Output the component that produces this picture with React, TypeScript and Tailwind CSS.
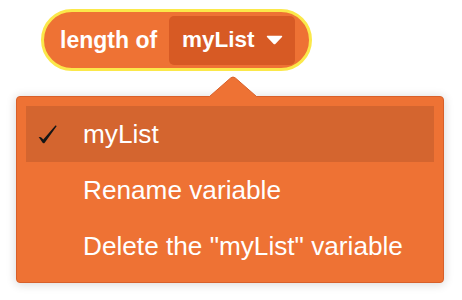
import React from 'react';

const font = { fontFamily: '"Liberation Sans", Arial, Helvetica, sans-serif' };

function CheckIcon() {
  return (
    <svg width="24" height="22" viewBox="0 0 24 22" className="shrink-0">
      <path
        d="M2.6 14.6 Q4.6 13.2 6.6 15.8 L7.3 16.6 L19.4 2.6 Q20.3 2.2 20.6 3.2 L8.9 19.4 Q7.6 21 6.4 19.6 L4.4 16.4 Q3.6 15.3 2.6 14.6 Z"
        fill="#161616"
      />
    </svg>
  );
}

function DropdownCaret() {
  return (
    <svg width="17" height="10" viewBox="0 0 17 10" className="shrink-0">
      <path d="M1.5 0.8 H15.5 Q16.8 0.8 16 2 L9.6 8.8 Q8.5 9.9 7.4 8.8 L1 2 Q0.2 0.8 1.5 0.8 Z" fill="#ffffff" />
    </svg>
  );
}

const items = [
  { label: 'myList', checked: true },
  { label: 'Rename variable', checked: false },
  { label: 'Delete the "myList" variable', checked: false },
];

export default function App() {
  return (
    <div className="relative h-[300px] w-[462px] overflow-hidden bg-white" style={font}>
      <div className="pl-[41px] pt-[9px]">
        <div className="inline-flex h-[62px] w-[271px] items-center rounded-full border-[3px] border-[#fbe84a] bg-[#ee7234] pl-[16px] pr-[14px]">
          <span className="text-[23px] font-bold leading-none text-white">length of</span>
          <div className="ml-auto flex h-[49px] w-[126px] items-center rounded-[5px] bg-[#d75a24] pl-[13px] pr-[12px]">
            <span className="text-[22.5px] font-bold leading-none text-white">myList</span>
            <span className="ml-auto">
              <DropdownCaret />
            </span>
          </div>
        </div>
      </div>

      <div className="ml-[16px] mt-[25px] w-[428px] rounded-[4px] border border-[#d8602a] bg-[#ee7234] px-[9px] pb-[8px] pt-[9px] shadow-[0_1px_10px_1px_rgba(0,0,0,0.14)]">
        {items.map((item) => (
          <div
            key={item.label}
            className={`flex h-[56px] items-center ${item.checked ? 'bg-[#d4652f]' : ''}`}
          >
            <div className="flex w-[57px] items-center pl-[10px]">{item.checked && <CheckIcon />}</div>
            <span className="text-[26.2px] leading-none text-white">{item.label}</span>
          </div>
        ))}
      </div>

      {/* pointer from menu up to the block */}
      <svg className="absolute left-[209px] top-[76px]" width="48" height="22" viewBox="0 0 48 22">
        <path d="M0.5 20.5 L21.6 2 Q24 0 26.4 2 L47.5 20.5 L47.5 22 L0.5 22 Z" fill="#ee7234" />
        <path d="M0.5 20.5 L21.6 2 Q24 0 26.4 2 L47.5 20.5" fill="none" stroke="#d8602a" strokeWidth="1" />
      </svg>
    </div>
  );
}
